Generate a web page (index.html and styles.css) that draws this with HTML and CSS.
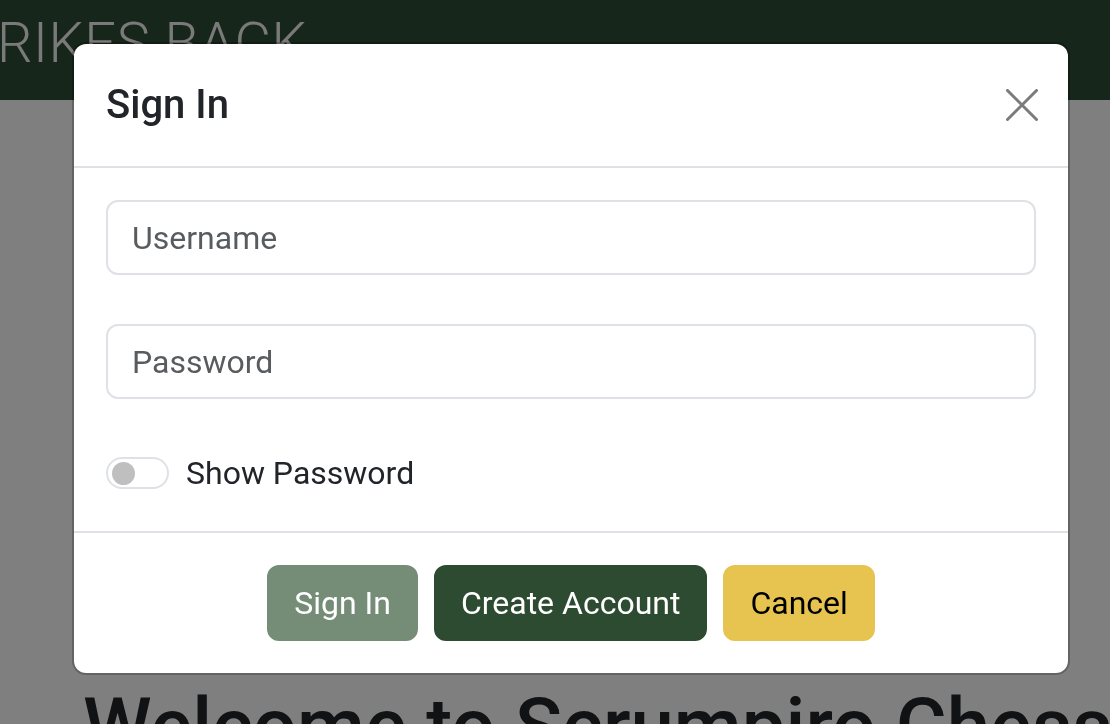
FILE: index.html
```html
<!DOCTYPE html>
<html lang="en">
<head>
<meta charset="utf-8">
<title>Sign In</title>
<link rel="stylesheet" href="styles.css">
</head>
<body>
<header class="navbar">
  <span class="brand">RIKES BACK</span>
</header>
<main class="page">
  <h1 class="welcome">Welcome to Scrumpiro Chess</h1>
</main>
<div class="backdrop"></div>
<div class="modal">
  <div class="modal-header">
    <h5 class="modal-title">Sign In</h5>
    <button class="btn-close" aria-label="Close">
      <svg viewBox="0 0 32 32" width="32" height="32"><path d="M1.5 1.5L30.5 30.5M30.5 1.5L1.5 30.5" stroke="#7b7b7b" stroke-width="3" stroke-linecap="round" fill="none"/></svg>
    </button>
  </div>
  <div class="modal-body">
    <input class="form-control" type="text" placeholder="Username">
    <input class="form-control second" type="password" placeholder="Password">
    <div class="form-switch">
      <span class="switch-track"><span class="switch-knob"></span></span>
      <span class="switch-label">Show Password</span>
    </div>
  </div>
  <div class="modal-footer">
    <button class="btn btn-disabled">Sign In</button>
    <button class="btn btn-primary">Create Account</button>
    <button class="btn btn-warning">Cancel</button>
  </div>
</div>
</body>
</html>
```

FILE: styles.css
```css
* { box-sizing: border-box; }

html, body {
  margin: 0;
  padding: 0;
  height: 100%;
  overflow: hidden;
}

body {
  background: #ffffff;
  font-family: Roboto, "Liberation Sans", sans-serif;
  color: #212529;
}

.navbar {
  height: 100px;
  background: #2e4c34;
  display: flex;
  align-items: flex-start;
  overflow: hidden;
}

.brand {
  margin-left: -3px;
  margin-top: 3px;
  font-size: 56px;
  font-weight: 300;
  letter-spacing: 0.5px;
  line-height: 80px;
  color: #f4f4f4;
  white-space: nowrap;
}

.page {
  padding: 0 83px;
}

.welcome {
  margin: 580px 0 0;
  font-size: 78px;
  font-weight: 500;
  line-height: 1.2;
  color: #212529;
  white-space: nowrap;
}

.backdrop {
  position: fixed;
  inset: 0;
  background: rgba(0, 0, 0, 0.5);
}

.modal {
  position: fixed;
  left: 72px;
  top: 42px;
  width: 998px;
  background: #ffffff;
  border: 2px solid rgba(0, 0, 0, 0.22);
  border-radius: 14px;
  background-clip: padding-box;
  display: flex;
  flex-direction: column;
}

.modal-header {
  height: 124px;
  padding: 0 32px;
  display: flex;
  align-items: center;
  justify-content: space-between;
  border-bottom: 2px solid #dee2e6;
}

.modal-title {
  margin: 0;
  font-size: 40px;
  font-weight: 500;
  line-height: 60px;
  color: #212529;
}

.btn-close {
  width: 48px;
  height: 48px;
  padding: 8px;
  margin-right: -10px;
  border: 0;
  background: transparent;
  display: flex;
  align-items: center;
  justify-content: center;
}

.btn-close svg { display: block; }

.modal-body {
  padding: 32px 32px 34px;
  display: flex;
  flex-direction: column;
}

.form-control {
  display: block;
  width: 100%;
  height: 75px;
  padding: 12px 24px;
  font-family: Roboto, "Liberation Sans", sans-serif;
  font-size: 32px;
  line-height: 46px;
  color: #212529;
  border: 2px solid #dee2e6;
  border-radius: 12px;
  background: #ffffff;
  margin-bottom: 49px;
  outline: none;
}

.form-control.second {
  margin-bottom: 50px;
}

.form-control::placeholder {
  color: #595c5f;
}

.form-switch {
  height: 48px;
  display: flex;
  align-items: center;
}

.switch-track {
  width: 63px;
  height: 32px;
  border: 2px solid #dee2e6;
  border-radius: 16px;
  display: flex;
  align-items: center;
  padding-left: 4px;
}

.switch-knob {
  width: 23px;
  height: 23px;
  border-radius: 50%;
  background: #bfbfbf;
}

.switch-label {
  margin-left: 17px;
  font-size: 32px;
  line-height: 48px;
  color: #212529;
}

.modal-footer {
  border-top: 2px solid #dee2e6;
  padding: 32px 24px 32px;
  display: flex;
  justify-content: center;
  gap: 16px;
}

.btn {
  font-family: Roboto, "Liberation Sans", sans-serif;
  font-size: 32px;
  line-height: 48px;
  padding: 12px 25px;
  border: 2px solid transparent;
  border-radius: 12px;
  cursor: pointer;
}

.btn-disabled {
  background: #758d77;
  border-color: #758d77;
  color: #ffffff;
}

.btn-primary {
  background: #2d4b30;
  border-color: #2d4b30;
  color: #ffffff;
}

.btn-warning {
  background: #e6c44f;
  border-color: #e6c44f;
  color: #000000;
}
```
